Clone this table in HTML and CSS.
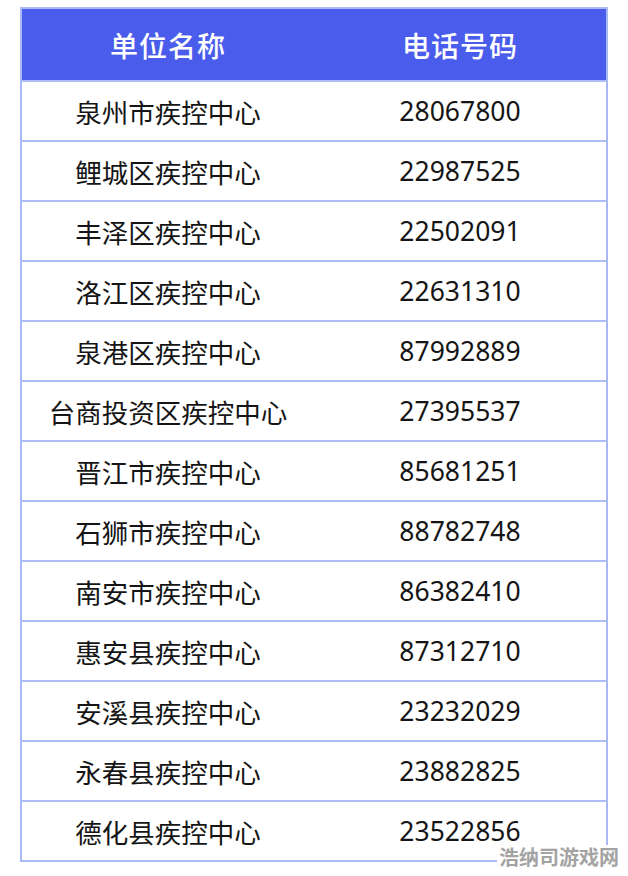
FILE: index.html
```html
<!DOCTYPE html>
<html lang="zh">
<head>
<meta charset="utf-8">
<link rel="stylesheet" href="styles.css">
</head>
<body>
<div class="page">
  <table class="tbl">
    <thead>
      <tr><th>单位名称</th><th>电话号码</th></tr>
    </thead>
    <tbody>
      <tr><td>泉州市疾控中心</td><td>28067800</td></tr>
      <tr><td>鲤城区疾控中心</td><td>22987525</td></tr>
      <tr><td>丰泽区疾控中心</td><td>22502091</td></tr>
      <tr><td>洛江区疾控中心</td><td>22631310</td></tr>
      <tr><td>泉港区疾控中心</td><td>87992889</td></tr>
      <tr><td>台商投资区疾控中心</td><td>27395537</td></tr>
      <tr><td>晋江市疾控中心</td><td>85681251</td></tr>
      <tr><td>石狮市疾控中心</td><td>88782748</td></tr>
      <tr><td>南安市疾控中心</td><td>86382410</td></tr>
      <tr><td>惠安县疾控中心</td><td>87312710</td></tr>
      <tr><td>安溪县疾控中心</td><td>23232029</td></tr>
      <tr><td>永春县疾控中心</td><td>23882825</td></tr>
      <tr><td>德化县疾控中心</td><td>23522856</td></tr>
    </tbody>
  </table>
  <div class="watermark">浩纳司游戏网</div>
</div>
</body>
</html>
```
FILE: styles.css
```css
html, body {
  margin: 0;
  padding: 0;
  background: #ffffff;
}
.page {
  position: relative;
  width: 628px;
  height: 876px;
  padding: 7px 0 0 20px;
  box-sizing: border-box;
  font-family: "Noto Sans", "Noto Sans CJK SC", sans-serif;
}
.tbl {
  width: 588px;
  border-collapse: collapse;
  border: 2px solid #a9b9f3;
  table-layout: fixed;
}
.tbl th {
  background: #4a5ceb;
  color: #ffffff;
  font-size: 28px;
  font-weight: 500;
  height: 71px;
  padding: 0;
  text-align: center;
  letter-spacing: 1px;
}
.tbl td {
  height: 58px;
  padding: 0;
  border-top: 2px solid #adbdf5;
  font-size: 26.5px;
  color: #151515;
  text-align: center;
  vertical-align: middle;
}
.watermark {
  position: absolute;
  left: 497px;
  top: 845px;
  font-family: "Noto Sans CJK SC", sans-serif;
  font-weight: 700;
  font-size: 20px;
  line-height: 24px;
  color: #a3a3a3;
  background: #ffffff;
  padding: 0 2px;
}
```
